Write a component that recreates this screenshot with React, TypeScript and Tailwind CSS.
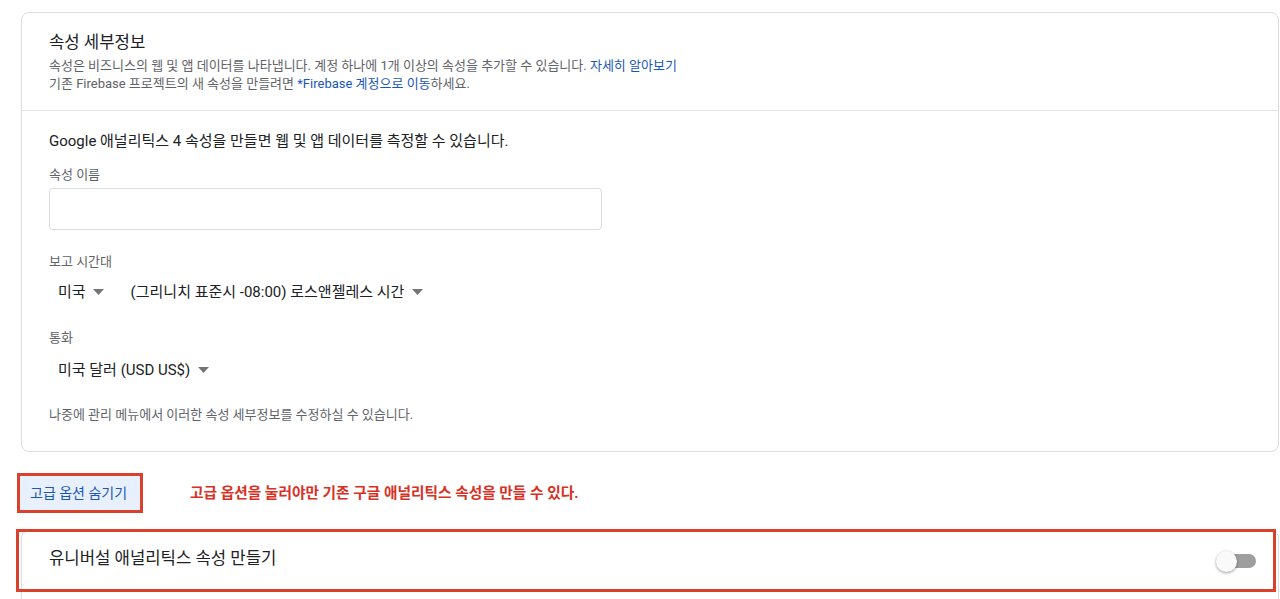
const font = { fontFamily: 'Roboto, "Noto Sans CJK KR", sans-serif' }

const Caret = () => (
  <svg width="11" height="6" viewBox="0 0 11 6" className="shrink-0">
    <path d="M0 0 L11 0 L5.5 6 Z" fill="#757575" />
  </svg>
)

const Toggle = () => (
  <div className="relative w-[40px] h-[22px] flex items-center">
    <div className="absolute left-[6px] w-[34px] h-[14px] rounded-full bg-[#9e9e9e]" />
    <div className="absolute left-0 w-[21px] h-[21px] rounded-full bg-[#fafafa] shadow-[0_1px_3px_rgba(0,0,0,0.4)]" />
  </div>
)

export default function App() {
  return (
    <div
      className="w-[1280px] h-[599px] overflow-hidden bg-white pt-[12px] text-[#202124]"
      style={font}
    >
      {/* Property details card */}
      <div className="ml-[21px] w-[1258px] border border-[#dadce0] rounded-lg">
        <div className="px-[27px] pt-[18px] pb-[17px] border-b border-[#e3e3e3]">
          <h2 className="text-[16.7px] leading-[24px] text-[#202124]">속성 세부정보</h2>
          <p className="text-[13px] leading-[18px] mt-[2px] text-[#5f6368]">
            속성은 비즈니스의 웹 및 앱 데이터를 나타냅니다. 계정 하나에 1개 이상의 속성을 추가할 수 있습니다.{' '}
            <span className="text-[#1a57b8]">자세히 알아보기</span>
          </p>
          <p className="text-[13px] leading-[18px] text-[#5f6368]">
            기존 Firebase 프로젝트의 새 속성을 만들려면{' '}
            <span className="text-[#1a57b8]">*Firebase 계정으로 이동</span>하세요.
          </p>
        </div>

        <div className="px-[27px] pt-[19px] pb-[28px]">
          <p className="text-[15px] leading-[22px] text-[#202124]">
            Google 애널리틱스 4 속성을 만들면 웹 및 앱 데이터를 측정할 수 있습니다.
          </p>

          <div className="mt-[15px] text-[13px] leading-[16px] text-[#5f6368]">속성 이름</div>
          <div className="mt-[5px] w-[553px] h-[42px] border border-[#dadce0] rounded-[4px]" />

          <div className="mt-[24px] text-[13px] leading-[16px] text-[#5f6368]">보고 시간대</div>
          <div className="mt-[11px] flex items-center text-[15px] leading-[22px] text-[#202124]">
            <div className="flex items-center gap-[7px] pl-[9px]">
              <span>미국</span>
              <Caret />
            </div>
            <div className="flex items-center gap-[8px] ml-[27px]">
              <span>(그리니치 표준시 -08:00) 로스앤젤레스 시간</span>
              <Caret />
            </div>
          </div>

          <div className="mt-[27px] text-[13px] leading-[16px] text-[#5f6368]">통화</div>
          <div className="mt-[13px] flex items-center gap-[8px] pl-[9px] text-[15px] leading-[22px] text-[#202124]">
            <span>미국 달러 (USD US$)</span>
            <Caret />
          </div>

          <p className="mt-[26px] text-[13px] leading-[16px] text-[#5f6368]">
            나중에 관리 메뉴에서 이러한 속성 세부정보를 수정하실 수 있습니다.
          </p>
        </div>
      </div>

      {/* Advanced options row */}
      <div className="mt-[21px] ml-[17px] flex items-center">
        <div className="border-[3px] border-[#d9412b] w-[126px] h-[40px]">
          <button className="w-full h-full bg-[#e8f0fe] text-left pl-[10px] text-[14px] text-[#1a57b8]">
            고급 옵션 숨기기
          </button>
        </div>
        <span className="ml-[47px] text-[14.7px] font-bold text-[#d93025]">
          고급 옵션을 눌러야만 기존 구글 애널리틱스 속성을 만들 수 있다.
        </span>
      </div>

      {/* Universal Analytics card */}
      <div className="relative mt-[17px]">
        <div className="ml-[21px] w-[1258px] h-[120px] border border-[#dadce0] rounded-t-lg">
          <div className="h-[56px] flex items-center justify-between pl-[27px] pr-[22px]">
            <span className="text-[16.7px] text-[#202124]">유니버설 애널리틱스 속성 만들기</span>
            <div className="mt-[4px]">
              <Toggle />
            </div>
          </div>
        </div>
        <div className="absolute top-[-1px] left-[16px] w-[1260px] h-[63px] border-[3px] border-[#d9412b]" />
      </div>
    </div>
  )
}
